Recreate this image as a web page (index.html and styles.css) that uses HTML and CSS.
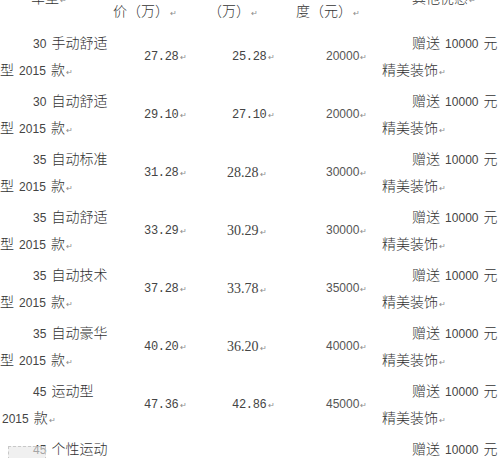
FILE: index.html
```html
<!DOCTYPE html>
<html lang="zh-CN">
<head>
<meta charset="utf-8">
<title>车型价格表</title>
<link rel="stylesheet" href="styles.css">
</head>
<body>
<div class="sheet">
  <table class="price">
    <colgroup>
      <col class="w1"><col class="w2"><col class="w3"><col class="w4"><col class="w5">
    </colgroup>
    <tr class="head">
      <td><div class="model">车型<span class="ret">↵</span></div></td>
      <td class="h">指导<br>价（万）<span class="ret">↵</span></td>
      <td class="h">优惠价<br>（万）<span class="ret">↵</span></td>
      <td class="h">优惠幅<br>度（元）<span class="ret">↵</span></td>
      <td><div class="gift">其他优惠<span class="ret">↵</span></div></td>
    </tr>
    <tr>
      <td><div class="model"><span class="n">30</span> 手动舒适型 <span class="n">2015</span> 款<span class="ret">↵</span></div></td>
      <td class="c2">27.28<span class="ret">↵</span></td>
      <td class="c3">25.28<span class="ret">↵</span></td>
      <td class="c4">20000<span class="ret">↵</span></td>
      <td><div class="gift">赠送 <span class="n">10000</span> 元<br>精美装饰<span class="ret">↵</span></div></td>
    </tr>
    <tr>
      <td><div class="model"><span class="n">30</span> 自动舒适型 <span class="n">2015</span> 款<span class="ret">↵</span></div></td>
      <td class="c2">29.10<span class="ret">↵</span></td>
      <td class="c3">27.10<span class="ret">↵</span></td>
      <td class="c4">20000<span class="ret">↵</span></td>
      <td><div class="gift">赠送 <span class="n">10000</span> 元<br>精美装饰<span class="ret">↵</span></div></td>
    </tr>
    <tr>
      <td><div class="model"><span class="n">35</span> 自动标准型 <span class="n">2015</span> 款<span class="ret">↵</span></div></td>
      <td class="c2">31.28<span class="ret">↵</span></td>
      <td class="c3 serif">28.28<span class="ret">↵</span></td>
      <td class="c4">30000<span class="ret">↵</span></td>
      <td><div class="gift">赠送 <span class="n">10000</span> 元<br>精美装饰<span class="ret">↵</span></div></td>
    </tr>
    <tr>
      <td><div class="model"><span class="n">35</span> 自动舒适型 <span class="n">2015</span> 款<span class="ret">↵</span></div></td>
      <td class="c2">33.29<span class="ret">↵</span></td>
      <td class="c3 serif">30.29<span class="ret">↵</span></td>
      <td class="c4">30000<span class="ret">↵</span></td>
      <td><div class="gift">赠送 <span class="n">10000</span> 元<br>精美装饰<span class="ret">↵</span></div></td>
    </tr>
    <tr>
      <td><div class="model"><span class="n">35</span> 自动技术型 <span class="n">2015</span> 款<span class="ret">↵</span></div></td>
      <td class="c2">37.28<span class="ret">↵</span></td>
      <td class="c3 serif">33.78<span class="ret">↵</span></td>
      <td class="c4">35000<span class="ret">↵</span></td>
      <td><div class="gift">赠送 <span class="n">10000</span> 元<br>精美装饰<span class="ret">↵</span></div></td>
    </tr>
    <tr>
      <td><div class="model"><span class="n">35</span> 自动豪华型 <span class="n">2015</span> 款<span class="ret">↵</span></div></td>
      <td class="c2">40.20<span class="ret">↵</span></td>
      <td class="c3 serif">36.20<span class="ret">↵</span></td>
      <td class="c4">40000<span class="ret">↵</span></td>
      <td><div class="gift">赠送 <span class="n">10000</span> 元<br>精美装饰<span class="ret">↵</span></div></td>
    </tr>
    <tr>
      <td><div class="model"><span class="n">45</span> 运动型 <span class="n">2015</span> 款<span class="ret">↵</span></div></td>
      <td class="c2">47.36<span class="ret">↵</span></td>
      <td class="c3">42.86<span class="ret">↵</span></td>
      <td class="c4">45000<span class="ret">↵</span></td>
      <td><div class="gift">赠送 <span class="n">10000</span> 元<br>精美装饰<span class="ret">↵</span></div></td>
    </tr>
    <tr>
      <td><div class="model"><span class="n">45</span> 个性运动型 <span class="n">2015</span> 款<span class="ret">↵</span></div></td>
      <td class="c2"></td>
      <td class="c3"></td>
      <td class="c4"></td>
      <td><div class="gift">赠送 <span class="n">10000</span> 元<br>精美装饰<span class="ret">↵</span></div></td>
    </tr>
  </table>
  <div class="mark"></div>
</div>
</body>
</html>
```
FILE: styles.css
```css
html, body {
  margin: 0;
  padding: 0;
  background: #fff;
}
body {
  width: 500px;
  height: 458px;
  overflow: hidden;
}
.sheet {
  position: relative;
  width: 500px;
  height: 458px;
  overflow: hidden;
}
.price {
  border-collapse: collapse;
  table-layout: fixed;
  width: 520px;
  margin-top: -30px;
  font-family: "Noto Sans CJK SC", "Liberation Sans", sans-serif;
  font-size: 14px;
  font-weight: 300;
  color: #333;
  line-height: 25px;
}
.w1 { width: 113px; }
.w2 { width: 95px; }
.w3 { width: 88px; }
.w4 { width: 86px; }
.w5 { width: 138px; }
.price td {
  padding: 0;
  height: 58px;
  vertical-align: middle;
}
.model {
  width: 108px;
  text-indent: 31px;
}
.gift {
  text-indent: 30px;
  white-space: nowrap;
}
.n {
  font-family: "Liberation Sans", sans-serif;
  font-size: 12px;
  color: #444;
  padding: 0 2px;
}
.price td.h {
  white-space: nowrap;
}
.price td.c2,
.price td.c3 {
  font-family: "Liberation Mono", monospace;
  font-size: 12px;
  letter-spacing: -0.3px;
  color: #444;
}
.price td.c2 { padding-left: 31px; }
.price td.c3 { padding-left: 24px; }
.price td.c3.serif {
  font-family: "Liberation Serif", serif;
  font-size: 14px;
  letter-spacing: 0;
  padding-left: 19px;
}
.price td.c4 {
  padding-left: 30px;
  font-family: "Liberation Sans", sans-serif;
  font-size: 12px;
  color: #555;
}
.ret {
  font-family: "DejaVu Sans", sans-serif;
  font-size: 8px;
  color: #8a8a8a;
  letter-spacing: 0;
  margin-left: 1px;
}
.mark {
  position: absolute;
  left: 8px;
  top: 446px;
  width: 36px;
  height: 12px;
  border: 1px dashed #c8c8c8;
  background: rgba(230, 230, 230, 0.6);
}
```
